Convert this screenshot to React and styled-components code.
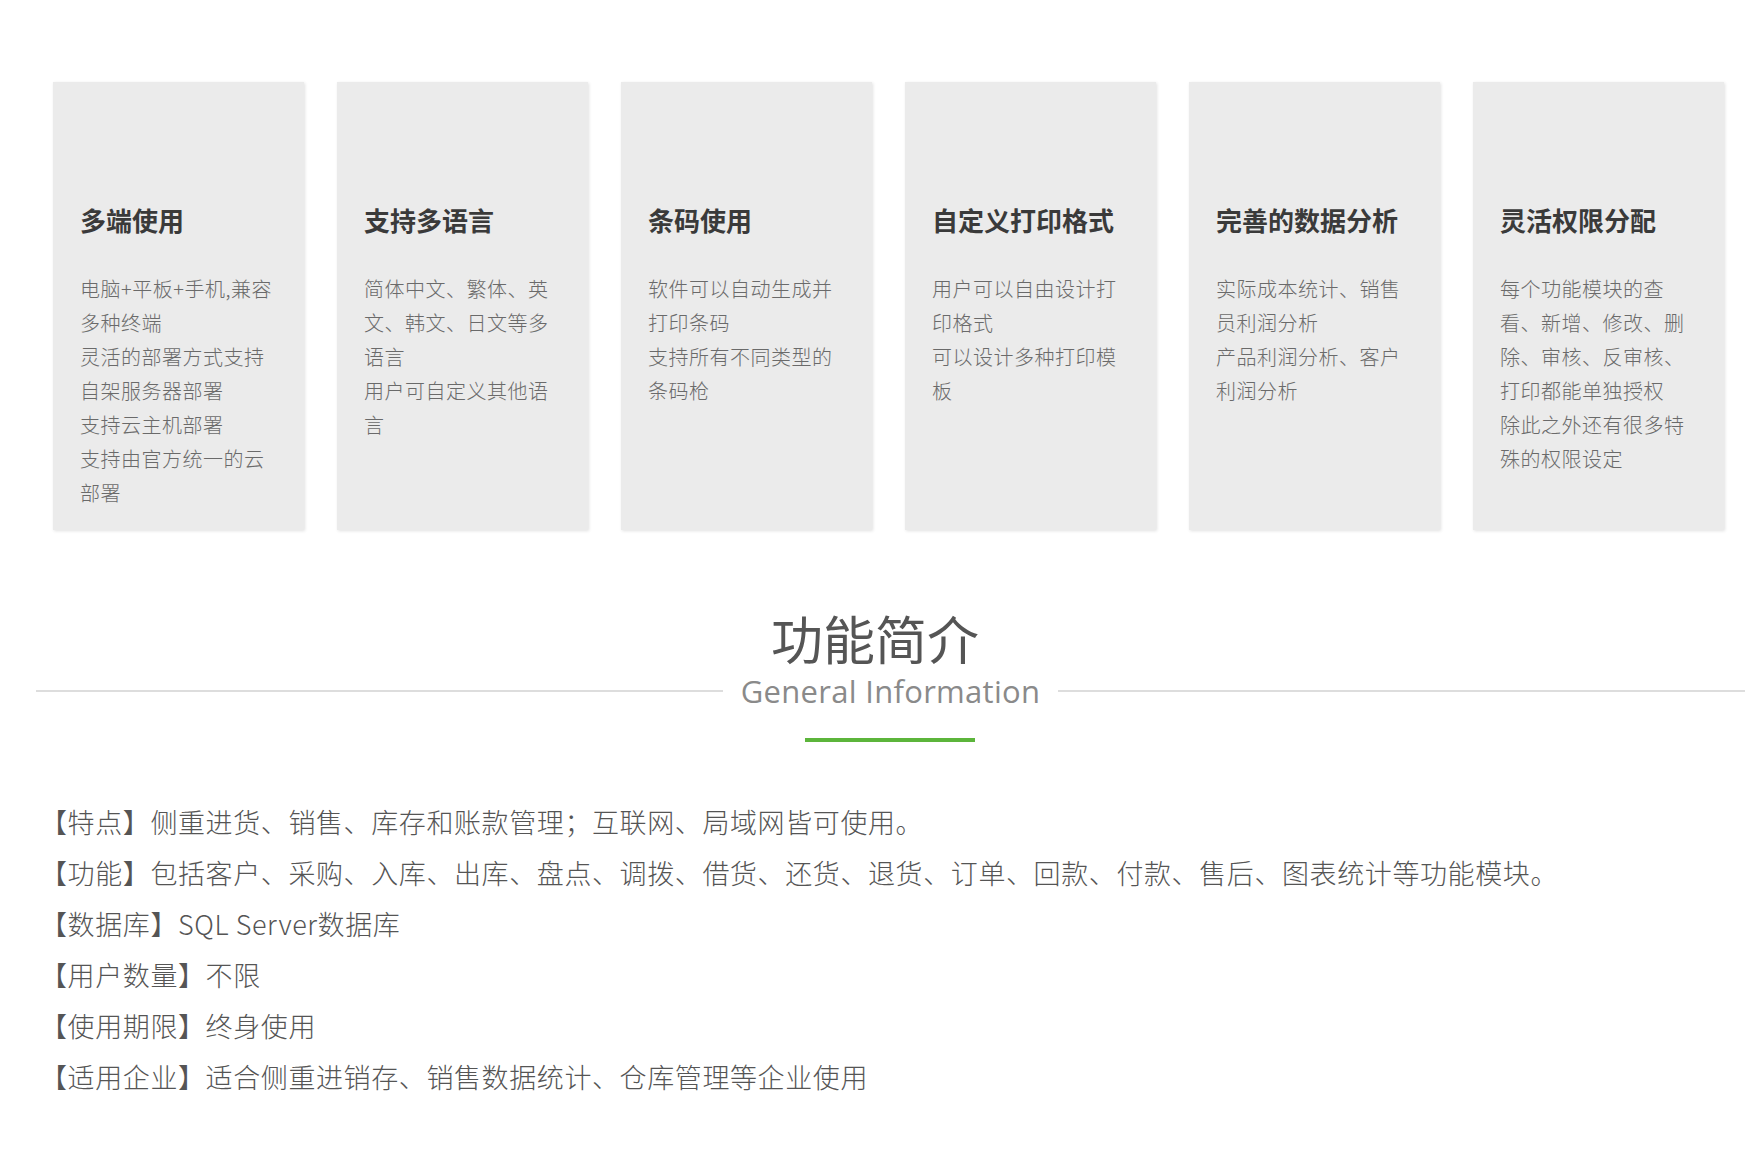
import React from "react";
import styled, { createGlobalStyle } from "styled-components";

const Global = createGlobalStyle`
  body { margin: 0; background: #fff; font-family: "Noto Sans CJK SC", "Noto Sans", sans-serif; }
`;
const Page = styled.div`width: 1750px; height: 1154px; overflow: hidden;`;
const Cards = styled.div`
  display: grid; grid-template-columns: repeat(6, 251px); gap: 33px;
  padding: 82px 0 0 53px;
`;
const Card = styled.div`
  height: 448px; background: #ebebeb; box-shadow: 1px 1px 3px rgba(0,0,0,0.12);
  padding: 0 26px 0 27px; box-sizing: border-box;
`;
const CardTitle = styled.h3`
  margin: 0; padding-top: 116px; font-size: 26px; font-weight: 700; color: #3a3a3a; line-height: 44px;
`;
const CardBody = styled.div`
  margin-top: 30px; font-size: 20px; letter-spacing: 0.5px; line-height: 34px; color: #6a6a6a; font-weight: 300;
`;
const Section = styled.div`margin-top: 76px; text-align: center;`;
const BigTitle = styled.h2`margin: 0; font-size: 52px; font-weight: 400; color: #555; line-height: 64px;`;
const SubRow = styled.div`display: flex; align-items: center; gap: 18px; padding: 0 5px 0 36px;`;
const Rule = styled.div`flex: 1; height: 2px; background: #ddd;`;
const Sub = styled.div`font-size: 31px; color: #8a8a8a; font-family: "Open Sans", "Noto Sans", sans-serif; letter-spacing: 0.3px;`;
const Green = styled.div`width: 170px; height: 4px; background: #5cb53b; margin: 26px auto 0 805px;`;
const List = styled.div`padding: 54px 0 0 40px;`;
const Item = styled.div`font-size: 27px; letter-spacing: 0.6px; line-height: 51px; color: #555; font-weight: 300;`;

const cards = [
  ["多端使用", ["电脑+平板+手机,兼容多种终端", "灵活的部署方式支持自架服务器部署", "支持云主机部署", "支持由官方统一的云部署"]],
  ["支持多语言", ["简体中文、繁体、英文、韩文、日文等多语言", "用户可自定义其他语言"]],
  ["条码使用", ["软件可以自动生成并打印条码", "支持所有不同类型的条码枪"]],
  ["自定义打印格式", ["用户可以自由设计打印格式", "可以设计多种打印模板"]],
  ["完善的数据分析", ["实际成本统计、销售员利润分析", "产品利润分析、客户利润分析"]],
  ["灵活权限分配", ["每个功能模块的查看、新增、修改、删除、审核、反审核、打印都能单独授权", "除此之外还有很多特殊的权限设定"]],
];
const items = [
  "【特点】侧重进货、销售、库存和账款管理；互联网、局域网皆可使用。",
  "【功能】包括客户、采购、入库、出库、盘点、调拨、借货、还货、退货、订单、回款、付款、售后、图表统计等功能模块。",
  "【数据库】SQL Server数据库",
  "【用户数量】不限",
  "【使用期限】终身使用",
  "【适用企业】适合侧重进销存、销售数据统计、仓库管理等企业使用",
];

export default function App() {
  return (
    <Page>
      <Global />
      <Cards>
        {cards.map(([t, lines]) => (
          <Card key={t}>
            <CardTitle>{t}</CardTitle>
            <CardBody>{lines.map((l) => <div key={l}>{l}</div>)}</CardBody>
          </Card>
        ))}
      </Cards>
      <Section>
        <BigTitle>功能简介</BigTitle>
        <SubRow><Rule /><Sub>General Information</Sub><Rule /></SubRow>
        <Green />
      </Section>
      <List>{items.map((i) => <Item key={i}>{i}</Item>)}</List>
    </Page>
  );
}
